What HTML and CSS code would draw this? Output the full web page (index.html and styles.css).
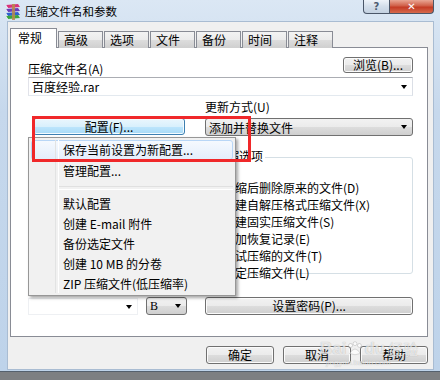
FILE: index.html
```html
<!DOCTYPE html>
<html lang="zh-CN">
<head>
    <meta charset="UTF-8">
    <title>压缩文件名和参数</title>
    <link rel="stylesheet" href="styles.css">
</head>
<body>
    <div class="window">
        <!-- Title bar with WinRAR icon and caption buttons -->
        <div class="titlebar">
            <svg class="app-icon" viewBox="0 0 18 18" width="18" height="18">
                <path d="M2 2 L14 1 L16 4 L4 5 Z" fill="#d8337a"/>
                <path d="M2 2 L4 5 L4 6 L2 3 Z" fill="#f4f4f4"/>
                <path d="M2 6 L14 5 L16 8 L4 9 Z" fill="#6a3fb8"/>
                <path d="M2 6 L4 9 L4 10 L2 7 Z" fill="#f4f4f4"/>
                <path d="M2 10 L14 9 L16 12 L4 13 Z" fill="#2f62d0"/>
                <path d="M2 10 L4 13 L4 14 L2 11 Z" fill="#f4f4f4"/>
                <path d="M2 13 L14 12 L16 15 L4 16 Z" fill="#3aa640"/>
                <path d="M2 13 L4 16 L4 17 L2 14 Z" fill="#f4f4f4"/>
                <rect x="8" y="1" width="3" height="16" fill="#b98a4a" opacity="0.85"/>
            </svg>
            <span class="title">压缩文件名和参数</span>
            <div class="caption-buttons">
                <span class="cap-btn help">?</span>
                <span class="cap-btn close">&#x2715;</span>
            </div>
        </div>

        <div class="client">
            <!-- Tab strip -->
            <div class="tabs">
                <span class="tab active">常规</span>
                <span class="tab">高级</span>
                <span class="tab">选项</span>
                <span class="tab">文件</span>
                <span class="tab">备份</span>
                <span class="tab">时间</span>
                <span class="tab">注释</span>
            </div>

            <!-- General tab page -->
            <div class="panel">
                <div class="row-top">
                    <span class="label name-label">压缩文件名(A)</span>
                    <span class="button browse">浏览(B)...</span>
                </div>
                <div class="combo edit">
                    <span class="value">百度经验.rar</span>
                    <i class="arrow"></i>
                </div>

                <div class="columns">
                    <div class="col-left">
                        <div class="button pressed">配置(F)...</div>
                        <div class="split-row">
                            <div class="combo edit volume"><i class="arrow"></i></div>
                            <div class="combo list unit">B<i class="arrow"></i></div>
                        </div>
                    </div>

                    <div class="col-right">
                        <div class="label">更新方式(U)</div>
                        <div class="combo list update">添加并替换文件<i class="arrow"></i></div>
                        <div class="group">
                            <span class="group-title">压缩选项</span>
                            <label class="check"><span class="box"></span>压缩后删除原来的文件(D)</label>
                            <label class="check"><span class="box"></span>创建自解压格式压缩文件(X)</label>
                            <label class="check"><span class="box"></span>创建固实压缩文件(S)</label>
                            <label class="check"><span class="box"></span>添加恢复记录(E)</label>
                            <label class="check"><span class="box"></span>测试压缩的文件(T)</label>
                            <label class="check"><span class="box"></span>锁定压缩文件(L)</label>
                        </div>
                        <div class="button password">设置密码(P)...</div>
                    </div>
                </div>
            </div>

            <!-- Dialog buttons -->
            <div class="actions">
                <span class="button">确定</span>
                <span class="button">取消</span>
                <span class="button">帮助</span>
            </div>
        </div>

        <!-- Drop-down menu of the profiles button -->
        <div class="menu">
            <div class="menu-item hover">保存当前设置为新配置...</div>
            <div class="menu-item tall">管理配置...</div>
            <div class="menu-sep"></div>
            <div class="menu-item">默认配置</div>
            <div class="menu-item">创建 E-mail 附件</div>
            <div class="menu-item">备份选定文件</div>
            <div class="menu-item">创建 10 MB 的分卷</div>
            <div class="menu-item">ZIP 压缩文件(低压缩率)</div>
        </div>

        <!-- Red annotation frame -->
        <div class="mark"></div>

        <!-- Watermark -->
        <div class="watermark">
            <div class="wm-logo">Bai<svg class="paw" viewBox="0 0 20 18" width="18" height="16"><circle cx="5" cy="5" r="2.2"/><circle cx="10" cy="3" r="2.2"/><circle cx="15" cy="5" r="2.2"/><path d="M4 14 Q10 4 16 14 Q10 17 4 14 Z"/></svg>du<span class="wm-cn">经验</span></div>
            <div class="wm-url">jingyan.baidu.com</div>
        </div>
    </div>
</body>
</html>
```

FILE: styles.css
```css
/* Whole page is the screenshot of a single dialog */
* {
    box-sizing: border-box;
}
body {
    margin: 0;
    width: 440px;
    height: 380px;
    overflow: hidden;
    background: #7d7f82;
    font-family: "Noto Sans CJK SC", "Liberation Sans", sans-serif;
    font-size: 12px;
    color: #000;
}
/* Window frame (Windows 7 basic theme) */
.window {
    position: relative;
    width: 440px;
    height: 372px;
    background: linear-gradient(#dbe7f4, #c6d8ec 30%, #bed3ea);
    border-bottom: 1px solid #55606d;
}
.titlebar {
    height: 22px;
    display: flex;
    align-items: center;
    padding-left: 4px;
}
.app-icon {
    margin-top: 1px;
}
.title {
    margin-left: 3px;
    font-size: 11.5px;
    line-height: 16px;
}
.caption-buttons {
    margin-left: auto;
    margin-right: 6px;
    align-self: flex-start;
    display: flex;
}
.cap-btn {
    height: 14px;
    border: 1px solid #4a5668;
    border-top: none;
    text-align: center;
    font-family: "DejaVu Sans", sans-serif;
    font-weight: bold;
    line-height: 13px;
}
.help {
    width: 27px;
    border-radius: 0 0 0 4px;
    background: linear-gradient(#eef3f9, #d3deea 50%, #c3d1e1);
    color: #4d5c70;
    font-size: 10px;
}
.close {
    width: 44px;
    border-left: none;
    border-radius: 0 0 4px 0;
    background: linear-gradient(#e9a694, #d05f48 45%, #c43b25 55%, #d66a4d);
    color: #fff;
    font-size: 10px;
}
/* Client area of the dialog */
.client {
    height: 347px;
    margin: 0 7px 0 8px;
    padding: 6px 5px 0 2px;
    background: #f0f0f0;
    box-shadow: 0 0 0 1px #a9bcd2;
}
.tabs {
    display: flex;
    align-items: flex-end;
    height: 20px;
    position: relative;
    z-index: 1;
    margin-bottom: -1px;
}
.tab {
    width: 45px;
    height: 17px;
    margin-left: 1px;
    border: 1px solid #898c95;
    border-bottom: none;
    background: linear-gradient(#f3f3f3, #ebebeb 50%, #dddddd 50%, #cfcfcf);
    padding-left: 5px;
    line-height: 16px;
}
.tab.active {
    width: 47px;
    height: 20px;
    margin-left: 0;
    background: #fff;
    padding-left: 7px;
    line-height: 18px;
}
.panel {
    height: 290px;
    border: 1px solid #898c95;
    background: #fff;
    padding: 9px 14px 0 17px;
}
.label {
    line-height: 14px;
}
.row-top {
    display: flex;
    justify-content: space-between;
    height: 16px;
}
.name-label {
    align-self: flex-end;
    margin-bottom: -3px;
}
/* Push buttons */
.button {
    display: flex;
    align-items: center;
    justify-content: center;
    height: 18px;
    border: 1px solid #707070;
    border-radius: 3px;
    background: linear-gradient(#f2f2f2, #ebebeb 50%, #dddddd 50%, #cfcfcf);
    box-shadow: inset 0 0 0 1px #fbfbfb;
    line-height: 14px;
}
.browse {
    width: 70px;
    height: 16px;
}
.pressed {
    width: 152px;
    height: 17px;
    margin: 18px 0 0 5px;
    border-color: #3c7fb1;
    background: linear-gradient(#eaf6fd, #d9f0fc 50%, #bee6fd 50%, #a7d9f5);
    box-shadow: inset 0 0 0 1px #f4fbff;
}
.password {
    margin-top: 23px;
}
/* Combo boxes */
.combo {
    display: flex;
    align-items: center;
    padding-left: 3px;
}
.combo.edit {
    height: 19px;
    margin-top: 4px;
    border: 1px solid #abadb3;
    border-color: #abadb3 #dbdfe6 #e3e9ef #e2e3ea;
    background: #fff;
}
.combo.list {
    height: 18px;
    border: 1px solid #707070;
    border-radius: 3px;
    background: linear-gradient(#f2f2f2, #ebebeb 50%, #dddddd 50%, #cfcfcf);
}
.update {
    margin-top: 4px;
}
.arrow {
    margin-left: auto;
    margin-right: 5px;
    width: 0;
    height: 0;
    border-left: 3.5px solid transparent;
    border-right: 3.5px solid transparent;
    border-top: 4px solid #000;
}
.columns {
    display: grid;
    grid-template-columns: 162px 208px;
    column-gap: 15px;
    margin-top: 4px;
}
.col-left {
    display: flex;
    flex-direction: column;
}
.split-row {
    margin-top: auto;
    display: flex;
    align-items: flex-end;
}
.combo.edit.volume {
    width: 110px;
    height: 17px;
    margin-top: 0;
    border-color: #eef0f3;
}
.unit {
    width: 41px;
    margin-left: 8px;
    font-family: "Liberation Serif", serif;
}
/* Options group box */
.group {
    margin: 21px 0 0 -2px;
    height: 117px;
    border: 1px solid #d5dfe5;
    border-radius: 3px;
    padding: 0 4px 0 3px;
}
.group-title {
    display: inline-block;
    margin: -9px 0 0 6px;
    padding: 0 2px;
    background: #fff;
    line-height: 14px;
    vertical-align: top;
}
.check {
    display: flex;
    align-items: center;
    height: 17px;
    gap: 3px;
}
.check:first-of-type {
    margin-top: 4px;
}
.box {
    width: 13px;
    height: 13px;
    border: 1px solid #8e8f8f;
    background: linear-gradient(135deg, #dcdcdc, #fcfcfc);
}
.actions {
    display: flex;
    justify-content: flex-end;
    gap: 9px;
    margin-top: 9px;
}
.actions .button {
    width: 68px;
}
/* Popup menu lies over the dialog */
.menu {
    position: absolute;
    left: 28px;
    top: 137px;
    width: 208px;
    height: 159px;
    border: 1px solid #979797;
    background: #f1f1f1;
    padding: 2px;
    box-shadow: 2px 2px 3px rgba(0, 0, 0, 0.35);
    z-index: 2;
}
.menu::before {
    content: "";
    position: absolute;
    left: 26px;
    top: 2px;
    bottom: 2px;
    width: 2px;
    border-left: 1px solid #e2e3e3;
    border-right: 1px solid #ffffff;
}
.menu-item {
    height: 20px;
    line-height: 20px;
    padding-left: 31px;
    border: 1px solid transparent;
    border-radius: 3px;
}
.menu-item.tall {
    height: 21px;
}
.menu-item.hover {
    border-color: #b8d6f6;
    background: linear-gradient(#f5f9fe, #e4eefb);
    line-height: 18px;
}
.menu-sep {
    height: 12px;
    margin-left: 27px;
    border-top: 5px solid transparent;
}
.menu-sep::after {
    content: "";
    display: block;
    height: 2px;
    border-top: 1px solid #e0e0e0;
    border-bottom: 1px solid #ffffff;
}
/* Red annotation rectangle */
.mark {
    position: absolute;
    left: 32px;
    top: 116px;
    width: 219px;
    height: 46px;
    border: 3px solid #f0282a;
    z-index: 3;
}
/* Faint watermark in the corner */
.watermark {
    position: absolute;
    left: 320px;
    top: 339px;
    z-index: 4;
    color: rgba(255, 255, 255, 0.7);
    text-shadow: 0 0 1px rgba(0, 0, 0, 0.3);
    pointer-events: none;
}
.wm-logo {
    display: flex;
    align-items: center;
    font-family: "Liberation Sans", sans-serif;
    font-size: 17px;
    font-weight: bold;
    line-height: 19px;
}
.paw {
    fill: rgba(255, 255, 255, 0.7);
    stroke: rgba(0, 0, 0, 0.25);
    stroke-width: 0.6;
}
.wm-cn {
    margin-left: 3px;
    font-family: "Noto Sans CJK SC", sans-serif;
    font-size: 15px;
    font-weight: normal;
}
.wm-url {
    margin-left: 6px;
    font-family: "Liberation Sans", sans-serif;
    font-size: 8px;
    line-height: 10px;
}
```
